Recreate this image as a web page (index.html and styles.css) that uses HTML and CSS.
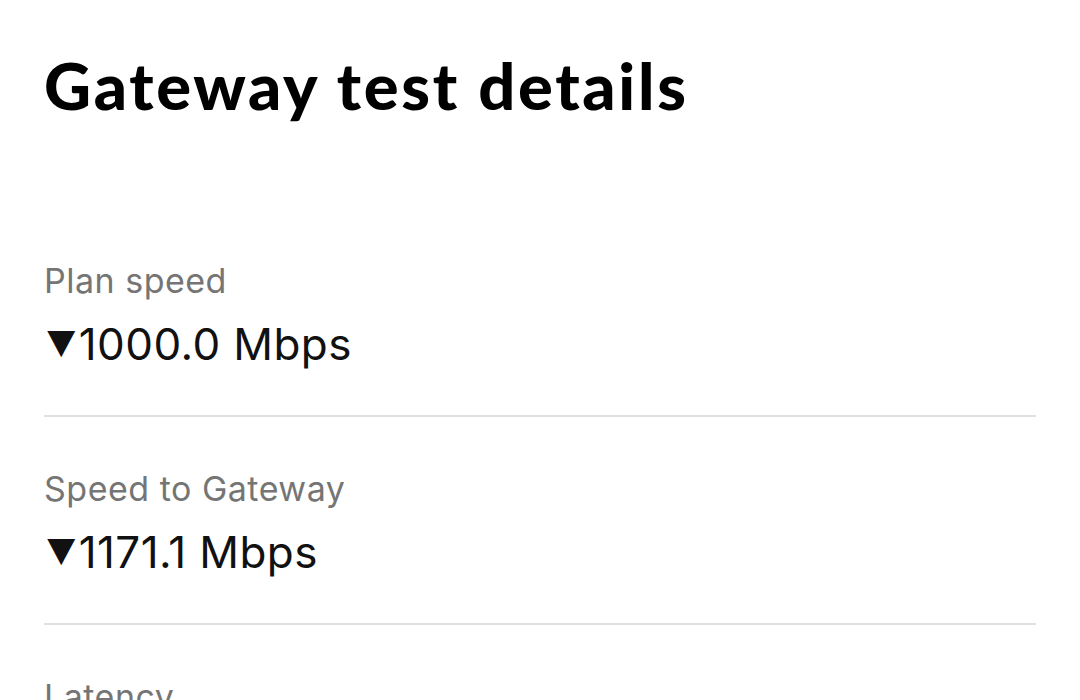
FILE: index.html
```html
<!DOCTYPE html>
<html lang="en">
<head>
<meta charset="utf-8">
<title>Gateway test details</title>
<link rel="stylesheet" href="styles.css">
</head>
<body>
<main class="page">
  <h1 class="title">Gateway test details</h1>
  <section class="list">
    <div class="row">
      <div class="label">Plan speed</div>
      <div class="value"><span class="arrow">&#9660;</span>1000.0 Mbps</div>
    </div>
    <div class="row">
      <div class="label">Speed to Gateway</div>
      <div class="value"><span class="arrow">&#9660;</span>1171.1 Mbps</div>
    </div>
    <div class="row">
      <div class="label">Latency</div>
      <div class="value">&nbsp;</div>
    </div>
  </section>
</main>
</body>
</html>
```

FILE: styles.css
```css
html, body {
  margin: 0;
  padding: 0;
  background: #ffffff;
  overflow: hidden;
}

.page {
  padding: 0 44px;
  font-family: Inter, "Liberation Sans", sans-serif;
  color: #000;
}

.title {
  margin: 0;
  padding-top: 45px;
  font-family: Lato, Inter, sans-serif;
  font-weight: 900;
  font-size: 65px;
  line-height: 80px;
  letter-spacing: 2.7px;
  height: 164px;
}

.row {
  border-bottom: 2px solid #e0e0e0;
  padding-top: 52px;
  height: 154px;
}

.label {
  font-size: 34px;
  line-height: 40px;
  letter-spacing: 0.5px;
  color: #757575;
}

.value {
  margin-top: 16px;
  font-size: 44px;
  line-height: 54px;
  letter-spacing: 0.4px;
  color: #111;
}

.arrow {
  display: inline-block;
  font-size: 34px;
  vertical-align: 4px;
  transform: scaleX(0.9);
}
```
